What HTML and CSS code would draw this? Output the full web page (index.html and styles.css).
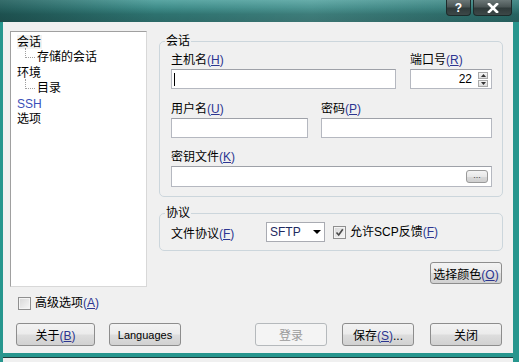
FILE: index.html
```html
<!DOCTYPE html>
<html lang="zh-CN">
<head>
    <meta charset="UTF-8">
    <title>会话</title>
    <link rel="stylesheet" href="styles.css">
</head>
<body>
<div class="window">
    <div class="titlebar">
        <span class="cap-btn help">?</span>
        <span class="cap-btn close">
            <svg width="14" height="10" viewBox="0 0 14 10"><path d="M3 1 L11 9 M11 1 L3 9" stroke="#fff" stroke-width="2.6" stroke-linecap="square"/></svg>
        </span>
    </div>

    <div class="client">
        <div class="main">
            <div class="left">
                <ul class="tree">
                    <li class="node"><span class="sel">会话</span></li>
                    <li class="node child">存储的会话</li>
                    <li class="node">环境</li>
                    <li class="node child">目录</li>
                    <li class="node ssh">SSH</li>
                    <li class="node">选项</li>
                </ul>
                <div class="check advanced"><span class="box"></span>高级选项<span class="key">(<u>A</u>)</span></div>
            </div>

            <div class="right">
                <fieldset class="group session">
                    <legend>会话</legend>
                    <div class="row host-row">
                        <div class="field">
                            <label>主机名<span class="key">(<u>H</u>)</span></label>
                            <div class="input"><span class="caret"></span></div>
                        </div>
                        <div class="field">
                            <label>端口号<span class="key">(<u>R</u>)</span></label>
                            <div class="input port">
                                <span class="num">22</span>
                                <span class="spin">
                                    <span class="spin-btn"><svg width="5" height="3" viewBox="0 0 5 3"><path d="M0 3 L2.5 0 L5 3 Z" fill="#333"/></svg></span>
                                    <span class="spin-btn"><svg width="5" height="3" viewBox="0 0 5 3"><path d="M0 0 L2.5 3 L5 0 Z" fill="#333"/></svg></span>
                                </span>
                            </div>
                        </div>
                    </div>
                    <div class="row user-row">
                        <div class="field">
                            <label>用户名<span class="key">(<u>U</u>)</span></label>
                            <div class="input"></div>
                        </div>
                        <div class="field">
                            <label>密码<span class="key">(<u>P</u>)</span></label>
                            <div class="input"></div>
                        </div>
                    </div>
                    <div class="row key-row">
                        <div class="field">
                            <label>密钥文件<span class="key">(<u>K</u>)</span></label>
                            <div class="input keyfile"><span class="browse">...</span></div>
                        </div>
                    </div>
                </fieldset>

                <fieldset class="group protocol">
                    <legend>协议</legend>
                    <div class="proto-row">
                        <span class="proto-label">文件协议<span class="key">(<u>F</u>)</span></span>
                        <div class="select">
                            <span>SFTP</span>
                            <svg width="8" height="4" viewBox="0 0 8 4"><path d="M0 0 L8 0 L4 4 Z" fill="#000"/></svg>
                        </div>
                        <div class="check scp">
                            <span class="box checked"><svg width="9" height="9" viewBox="0 0 9 9"><path d="M1.5 4.5 L3.7 7 L7.8 1.2" fill="none" stroke="#4a4a4a" stroke-width="1.6"/></svg></span>
                            允许SCP反馈<span class="key">(<u>F</u>)</span>
                        </div>
                    </div>
                </fieldset>

                <div class="color-row">
                    <button class="btn color">选择颜色<span class="key">(<u>O</u>)</span></button>
                </div>
            </div>
        </div>

        <div class="buttons">
            <button class="btn about">关于<span class="key">(<u>B</u>)</span></button>
            <button class="btn lang">Languages</button>
            <button class="btn login" disabled>登录</button>
            <button class="btn save">保存<span class="key">(<u>S</u>)</span>...</button>
            <button class="btn close-btn">关闭</button>
        </div>
    </div>

    <div class="next-window"></div>
</div>
</body>
</html>
```

FILE: styles.css
```css
body {
    margin: 0;
    width: 519px;
    height: 362px;
    overflow: hidden;
    background: #27968e;
    font-family: "Liberation Sans", "Noto Sans CJK SC", sans-serif;
    font-size: 12px;
    color: #000;
}
.window {
    width: 519px;
    height: 362px;
    background: #27968e;
}
.titlebar {
    height: 22px;
    box-sizing: border-box;
    display: flex;
    justify-content: flex-end;
    padding-right: 7px;
    background:
        linear-gradient(to right, rgba(10, 40, 40, 0.45) 0%, rgba(10, 40, 40, 0) 30%, rgba(255, 255, 255, 0.08) 60%, rgba(10, 40, 40, 0.2) 100%),
        linear-gradient(to bottom, #5aa6a3 0%, #3f8d8a 35%, #2d726f 65%, #2b6967 100%);
}
.cap-btn {
    height: 16px;
    box-sizing: border-box;
    margin-left: 2px;
    border: 1px solid #1d2b2b;
    border-top: none;
    border-radius: 0 0 4px 4px;
    background: linear-gradient(to bottom, #6b7777 0%, #4a5555 45%, #2f3a3a 55%, #3d4848 100%);
    color: #fff;
    display: flex;
    align-items: center;
    justify-content: center;
}
.help {
    width: 25px;
    font: bold 12px "Liberation Sans", sans-serif;
}
.close {
    width: 39px;
}

.client {
    margin: 0 6px 0 3px;
    height: 331px;
    box-sizing: border-box;
    background: #f0f0f0;
    padding: 9px 10px 0 7px;
}
.main {
    display: flex;
    gap: 12px;
    height: 278px;
}
.left {
    width: 137px;
}
.tree {
    list-style: none;
    margin: 0;
    padding: 3px 0 0 0;
    height: 256px;
    box-sizing: border-box;
    background: #fff;
    border: 1px solid #a0a0a0;
    border-right-color: #d8d8d8;
    border-bottom-color: #d8d8d8;
}
.node {
    position: relative;
    line-height: 15.4px;
    padding-left: 6px;
}
.sel {
    background: #f2f2f2;
    padding: 0 1px 0 0;
}
.node.child {
    padding-left: 26px;
}
.node.child::before {
    content: "";
    position: absolute;
    left: 14px;
    top: -2px;
    width: 9px;
    height: 9px;
    border-left: 1px dotted #a0a0a0;
    border-bottom: 1px dotted #a0a0a0;
}
.ssh {
    color: #3a4fb8;
}
.check {
    display: flex;
    align-items: center;
    line-height: 14px;
}
.box {
    width: 13px;
    height: 13px;
    box-sizing: border-box;
    border: 1px solid #8f8f8f;
    background: linear-gradient(135deg, #d6d6d6, #f7f7f7);
    box-shadow: inset 0 0 0 1px #f4f4f4;
    display: flex;
    align-items: center;
    justify-content: center;
}
.advanced {
    margin: 9px 0 0 8px;
}
.advanced .box {
    margin-right: 4px;
}
.key {
    color: #2c3590;
}

.right {
    width: 344px;
}
.group {
    margin: 4px 0 0 0;
    border: 1px solid #ccd6dc;
    border-radius: 5px;
    min-inline-size: 0;
    padding: 6px 10px 9px 11px;
}
.group legend {
    margin-left: -6px;
    padding: 0 1px;
    line-height: 12px;
}
.row {
    display: grid;
    column-gap: 13px;
}
.host-row {
    grid-template-columns: 225px 82px;
    column-gap: 14px;
}
.user-row {
    grid-template-columns: 137px 171px;
    margin-top: 13px;
}
.key-row {
    grid-template-columns: 321px;
    margin-top: 12px;
}
.field label {
    display: block;
    line-height: 14px;
    margin-bottom: 2px;
}
.input {
    height: 20px;
    box-sizing: border-box;
    background: #fff;
    border: 1px solid #b5b8c0;
    border-top-color: #9ea1a8;
    display: flex;
    align-items: center;
}
.key-row .input {
    height: 21px;
}
.caret {
    width: 1px;
    height: 13px;
    background: #000;
    margin-left: 2px;
}
.port {
    justify-content: flex-end;
    padding-right: 3px;
}
.num {
    margin-right: 6px;
}
.spin {
    display: flex;
    flex-direction: column;
    gap: 1px;
}
.spin-btn {
    width: 10px;
    height: 7px;
    box-sizing: border-box;
    border: 1px solid #a9a9a9;
    background: linear-gradient(#f6f6f6, #dcdcdc);
    display: flex;
    align-items: center;
    justify-content: center;
}
.keyfile {
    justify-content: flex-end;
    padding-right: 3px;
}
.browse {
    width: 22px;
    height: 13px;
    box-sizing: border-box;
    border: 1px solid #9a9a9a;
    border-radius: 3px;
    background: linear-gradient(#f4f4f4 0%, #e8e8e8 50%, #d9d9d9 51%, #cfcfcf 100%);
    font-size: 9px;
    line-height: 9px;
    text-align: center;
    color: #444;
}

.protocol {
    margin-top: 10px;
    padding-top: 3px;
    padding-bottom: 8px;
}
.proto-row {
    display: flex;
    align-items: center;
    height: 20px;
}
.proto-label {
    width: 95px;
}
.select {
    width: 59px;
    height: 20px;
    box-sizing: border-box;
    background: #fff;
    border: 1px solid #a9abb2;
    display: flex;
    align-items: center;
    justify-content: space-between;
    padding: 0 3px 0 3px;
    color: #1e2a60;
}
.scp {
    margin-left: 8px;
}
.scp .box {
    margin-right: 4px;
}

.color-row {
    display: flex;
    justify-content: flex-end;
    margin-top: 11px;
    padding-right: 1px;
}

.btn {
    height: 22px;
    box-sizing: border-box;
    border: 1px solid #8d8d8d;
    border-radius: 3px;
    background: linear-gradient(to bottom, #f3f3f3 0%, #ebebeb 48%, #dddddd 52%, #d1d1d1 100%);
    font-family: "Liberation Sans", "Noto Sans CJK SC", sans-serif;
    font-size: 12px;
    color: #000;
    padding: 0;
}
.color {
    width: 72px;
}
.buttons {
    display: flex;
    margin: 14px 1px 0 6px;
}
.buttons .btn {
    height: 23px;
    width: 72px;
}
.buttons .about {
    width: 79px;
}
.buttons .lang {
    margin-left: 14px;
    font-size: 11px;
}
.buttons .login {
    margin-left: auto;
    border-color: #b5b9bc;
    background: #f4f4f4;
    color: #9a9a9a;
}
.buttons .save {
    margin-left: 15px;
}
.buttons .close-btn {
    margin-left: 16px;
}

.next-window {
    margin: 4px 6px 0 3px;
    height: 10px;
    border-top: 1px solid #1c3b3a;
    background: #f0f0f0;
}
```
